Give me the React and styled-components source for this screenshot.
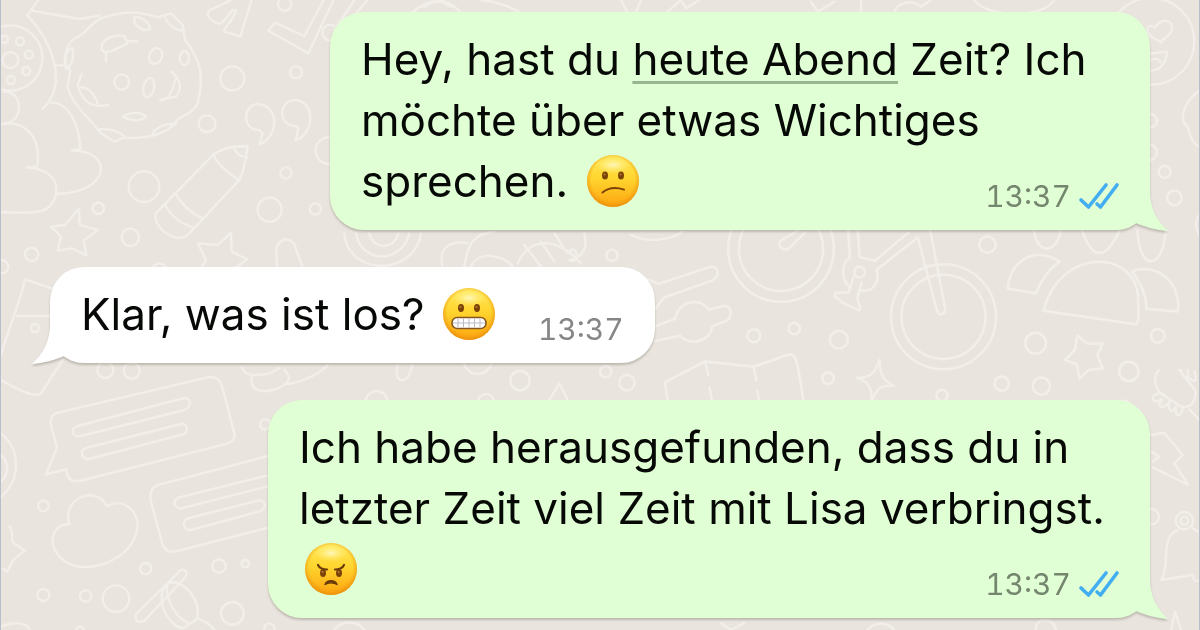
import React from "react";
import styled, { createGlobalStyle } from "styled-components";

const GlobalStyle = createGlobalStyle`
  body {
    margin: 0;
  }
`;

const Page = styled.div`
  position: relative;
  box-sizing: border-box;
  min-height: 100vh;
  overflow: hidden;
  background-color: #e9e5de;
  border: solid #b9bfc8;
  border-width: 0 1px;
  font-family: Inter, "Liberation Sans", sans-serif;
`;

const WallpaperSvg = styled.svg`
  position: absolute;
  inset: 0;
  width: 100%;
  height: 100%;
  fill: none;
  stroke: #f2efeb;
  stroke-width: 7;
  stroke-linecap: round;
  stroke-linejoin: round;
`;

const Chat = styled.main`
  position: relative;
  display: flex;
  flex-direction: column;
  gap: 37px;
  padding: 12px 49px;
`;

const Bubble = styled.article`
  position: relative;
  box-sizing: border-box;
  align-self: ${(props) => (props.$own ? "flex-end" : "flex-start")};
  max-width: ${(props) => props.$maxWidth};
  padding: 17px 31px 18px;
  border-radius: 34px;
  background-color: ${(props) => (props.$own ? "#e1ffd4" : "#fff")};
  color: #060906;
  filter: drop-shadow(0 2px 1px rgba(60, 50, 40, 0.25));
`;

const Tail = styled.svg`
  position: absolute;
  z-index: -1;
  bottom: -1px;
  ${(props) => (props.$own ? "right: -18px;" : "left: -18px;")}
  width: 52px;
  height: 51px;
  fill: ${(props) => (props.$own ? "#e1ffd4" : "#fff")};
  transform: ${(props) => (props.$own ? "none" : "scaleX(-1)")};
`;

const Text = styled.div`
  display: flow-root;
  font-size: 44px;
  line-height: 61px;
`;

const DateLink = styled.a`
  color: inherit;
  text-decoration: underline;
  text-decoration-color: #9ab592;
  text-decoration-thickness: 3px;
  text-decoration-skip-ink: none;
  text-underline-offset: 6px;
`;

// Floats into the free end of the last line
const Meta = styled.span`
  float: right;
  display: flex;
  align-items: center;
  gap: 8px;
  margin: 30px 0 0 39px;
  color: ${(props) => (props.$own ? "#74866e" : "#868689")};
  font-size: 30px;
  line-height: 30px;
`;

const Time = styled.time`
  font-variant-numeric: tabular-nums;
  font-weight: 400;
`;

const Checks = styled.svg`
  width: 40px;
  height: 26px;
  overflow: visible;
  fill: none;
  stroke: #42adf0;
  stroke-width: 3.6;
  stroke-linecap: round;
  stroke-linejoin: round;
`;

const EmojiSvg = styled.svg`
  width: 52px;
  height: 52px;
  margin: 0 4px 0 6px;
  vertical-align: -10px;
`;

const Emoji = ({ name, label, children }) => (
  <EmojiSvg viewBox="0 0 52 52" role="img" aria-label={label}>
    <defs>
      <linearGradient id={`${name}-face`} x1="0" y1="0" x2="0" y2="1">
        <stop offset="0" stopColor="#ffe95c" />
        <stop offset="0.45" stopColor="#ffd52f" />
        <stop offset="1" stopColor="#fda40f" />
      </linearGradient>
      <radialGradient id={`${name}-edge`} cx="0.5" cy="0.47" r="0.53">
        <stop offset="0.78" stopColor="#f09a10" stopOpacity="0" />
        <stop offset="1" stopColor="#e58a0c" stopOpacity="0.75" />
      </radialGradient>
      <radialGradient id={`${name}-shine`}>
        <stop offset="0" stopColor="#fffbd0" stopOpacity="0.85" />
        <stop offset="1" stopColor="#fff27a" stopOpacity="0" />
      </radialGradient>
    </defs>
    <circle cx="26" cy="26" r="26" fill={`url(#${name}-face)`} />
    <ellipse cx="26" cy="10" rx="18" ry="9" fill={`url(#${name}-shine)`} />
    <circle cx="26" cy="26" r="26" fill={`url(#${name}-edge)`} />
    {children}
  </EmojiSvg>
);

const Eyes = ({ y }) => (
  <g>
    <ellipse cx="18" cy={y} rx="3" ry="4" fill="#7a4208" />
    <ellipse cx="34" cy={y} rx="3" ry="4" fill="#7a4208" />
    <circle cx="17.6" cy={y - 1} r="1.1" fill="#b97a2c" />
    <circle cx="33.6" cy={y - 1} r="1.1" fill="#b97a2c" />
  </g>
);

const ConfusedFace = () => (
  <Emoji name="confused" label="😕">
    <Eyes y={20.5} />
    <path
      d="M15.5 37.5C21 33 29 32 37 34.6"
      fill="none"
      stroke="#7a4208"
      strokeWidth="2"
      strokeLinecap="round"
    />
  </Emoji>
);

const GrimacingFace = () => (
  <Emoji name="grimacing" label="😬">
    <Eyes y={20} />
    <rect x="9" y="29.5" width="34" height="11" rx="5.2" fill="#fff" stroke="#85571f" strokeWidth="1.6" />
    <path
      d="M10 35h32M15 31v8M20.5 30.5v9M26 30.5v9M31.5 30.5v9M37 31v8"
      fill="none"
      stroke="#bdb9c0"
      strokeWidth="1"
    />
  </Emoji>
);

const AngryFace = () => (
  <Emoji name="angry" label="😠">
    <Eyes y={30} />
    <path
      d="M13 22C14.5 25 18 26.5 22 26.5M39 22C37.5 25 34 26.5 30 26.5"
      fill="none"
      stroke="#6a3a08"
      strokeWidth="2.2"
      strokeLinecap="round"
    />
    <path
      d="M20 41.5C22 36.5 30 36.5 32 41.5C29 39.3 23 39.3 20 41.5Z"
      fill="#6a3a08"
      stroke="#6a3a08"
      strokeWidth="1.4"
      strokeLinejoin="round"
    />
  </Emoji>
);

const circles = [
  // top left
  [28, 180, 24], [57, 124, 12], [84, 164, 12], [76, 213, 12], [30, 240, 12], [10, 118, 11],
  [694, 235, 36], [885, 217, 18], [618, 371, 25], [429, 560, 46], [855, 519, 17],
  [806, 629, 36], [943, 627, 17], [292, 625, 17], [388, 712, 26], [92, 763, 20], [851, 12, 20],
  [984, 452, 40], [988, 98, 24], [2, 800, 20], [475, 812, 22],
  // bottom left
  [313, 1110, 24], [392, 1112, 24], [792, 1273, 15], [127, 1518, 16], [434, 1706, 17],
  [654, 1698, 20], [733, 1691, 11], [127, 1785, 18], [254, 1788, 17], [345, 1796, 40],
  [694, 1840, 34], [805, 1885, 15], [237, 1890, 10], [102, 984, 12],
  // middle
  [1833, 766, 17], [1557, 1142, 29], [1814, 1115, 17], [1878, 1148, 23], [1127, 1206, 33],
  [1430, 1080, 42], [1455, 1206, 24],
  // right edge
  [3491, 516, 18], [3520, 594, 22], [3448, 362, 20], [3444, 457, 24], [3451, 1550, 23],
  [3550, 1562, 12], [3550, 1562, 26],
];

const bicycleCircles = [
  [612, 132, 15], [316, 310, 18], [429, 290, 16], [554, 321, 25], [524, 429, 16],
  [843, 477, 16], [1010, 444, 20], [1121, 451, 24], [1105, 331, 29], [970, 55, 23],
  [1447, 310, 19], [1366, 410, 27], [1353, 512, 20],
];

const Wallpaper = () => (
  <WallpaperSvg viewBox="0 0 3600 1890" preserveAspectRatio="xMinYMin slice" aria-hidden="true">
    {circles.map(([x, y, r]) => (
      <circle key={`${x}-${y}-${r}`} cx={x} cy={y} r={r} />
    ))}

    {/* ball, clouds and moon */}
    <circle cx="26" cy="174" r="98" />
    <path d="M112 0L78 46C150 120 205 250 125 326M92 32L235 57L296 47M165 196h22M10 275C70 275 65 365 15 370" />
    <path d="M0 372C80 360 122 420 108 500L76 502C200 510 175 615 125 632C90 642 40 638 0 636" />
    <path d="M150 308C200 305 235 370 238 448L212 452C340 450 330 580 167 582" />
    <path d="M300 55C370 30 420 35 470 52L510 40L545 75L552 120C600 180 610 230 590 310C570 350 540 340 520 370C500 400 430 420 370 412L340 425L300 400C270 360 210 310 200 260L208 210C180 200 190 140 220 115C250 110 260 75 300 55Z" />
    <path d="M302 145C300 110 350 105 370 108L380 130L335 152C315 160 302 155 302 145ZM380 122L410 125M315 155V185M242 222L230 255C245 310 275 325 322 315M240 262C265 260 285 290 290 312M510 215C545 240 540 270 525 290L478 300M525 235C515 260 515 275 500 292M365 350C390 335 420 335 435 350C415 368 390 362 365 350ZM400 52C395 80 430 95 446 88C450 70 420 48 400 52ZM490 45C500 80 530 90 548 92M195 205C190 170 195 145 215 145C220 170 215 195 195 205M293 388C330 385 360 395 370 412M455 408C455 380 500 370 525 372" />
    <ellipse cx="464" cy="168" rx="19" ry="24" transform="rotate(20 464 168)" />
    <ellipse cx="550" cy="174" rx="14" ry="21" />
    <ellipse cx="362" cy="246" rx="22" ry="23" />
    <ellipse cx="443" cy="263" rx="16" ry="29" transform="rotate(12 443 263)" />

    {/* bow, ruler, quotes, pencil, stars */}
    <path d="M690 0L625 32C605 50 650 75 660 70C680 55 690 25 705 30C700 60 660 90 672 95L718 110L752 0" />
    <path d="M968 0L910 108L822 68L802 92L922 160L998 0" />
    <path d="M774 390C720 390 725 312 772 312C835 318 835 410 775 433L785 400ZM885 378C830 380 830 300 883 300C945 305 940 400 884 422L892 385Z" />
    <path d="M464 640L636 465C665 442 700 438 740 438C735 480 730 510 715 540L560 705C520 735 455 680 464 640ZM636 465C660 505 680 515 712 540M700 445C705 460 720 470 738 472M522 578C545 620 570 640 604 655M492 615C515 655 540 670 575 682" />
    <path d="M232 628C240 650 230 665 238 675L290 690L248 722L256 765L213 745L170 752L180 710L150 680L192 675Z" />
    <path d="M590 730L650 735L690 698L692 755L738 778L705 803M590 730L615 780L600 803M828 803L826 745C840 705 880 715 884 745L905 803" />

    {/* gift, speech bubbles */}
    <path d="M152 865L72 838C60 900 10 1020 0 1065M48 948H152M185 1080L120 1180C105 1195 50 1170 0 1140" />
    <path d="M172 1238L620 1132C650 1125 660 1145 665 1165L700 1300C705 1320 690 1328 670 1333L235 1443C205 1445 200 1435 195 1408L135 1423L168 1343L150 1275C145 1250 155 1242 172 1238Z" />
    <path d="M230 1278L545 1195C570 1190 575 1220 550 1230L240 1308C215 1315 205 1285 230 1278ZM255 1344L540 1272C560 1268 565 1298 545 1303L265 1377C240 1380 235 1350 255 1344Z" />
    <path d="M805 1367L475 1454C450 1460 445 1480 450 1505L485 1635C495 1655 505 1658 530 1653L805 1582M805 1425L535 1492C510 1500 520 1530 545 1524L805 1458M565 1554L770 1502C795 1498 800 1525 775 1534L570 1590C545 1592 540 1560 565 1554Z" />
    <path d="M205 1572C180 1500 280 1450 318 1518C370 1490 420 1540 408 1590C395 1660 310 1710 230 1700C140 1680 130 1575 205 1572Z" />
    <path d="M0 1300C60 1350 60 1440 0 1490M0 1365C25 1390 25 1420 0 1445M25 1578C40 1600 28 1620 38 1630L72 1652L38 1678L18 1715L5 1705M0 1880C30 1865 80 1865 85 1890" />
    <path d="M405 1842L540 1710C555 1705 562 1720 550 1735L430 1862C410 1872 400 1860 405 1842ZM500 1750C460 1790 490 1870 545 1885L585 1860C610 1810 545 1730 500 1750ZM500 1750C490 1790 520 1850 560 1868M590 1855C615 1865 630 1875 640 1890" />
    <path d="M722 1100C730 1130 760 1128 800 1122L835 1105M752 1125C745 1180 790 1180 830 1165C870 1150 870 1130 850 1110M850 1152C900 1150 960 1120 980 1095" />

    {/* strip above the first message */}
    <path d="M1060 0L1000 90M1100 0L1065 40M1230 40C1290 -10 1340 -10 1380 40M1270 20C1300 0 1320 0 1350 20M1440 0C1490 5 1530 20 1560 40M1860 0L1880 40M1920 0L1905 35M2000 35L2040 0L2055 25L2095 0M2430 5L2450 35L2500 5M2580 0V35M2680 35C2690 10 2730 -5 2760 20L2790 0M2920 0C2950 50 3120 60 3160 0" />

    {/* rings and croissant */}
    <path d="M1030 700C1040 830 1240 830 1260 700M1065 700C1080 790 1200 795 1225 700M1105 700C1115 750 1180 750 1192 700M1325 803C1310 740 1350 720 1400 730M1390 800C1400 730 1420 700 1480 695M1410 800C1430 750 1510 765 1535 800M1550 790C1580 720 1660 700 1740 790M1570 735L1620 800M1620 725L1660 785M1660 700L1700 760C1730 720 1740 800 1705 780C1750 770 1760 740 1750 700M1890 705C1940 730 2010 720 2045 695M1190 1095C1185 1120 1185 1140 1205 1140C1225 1138 1225 1120 1235 1095M1645 1200L1675 1150L1700 1200" />

    <g transform="translate(1920 675) scale(1.0714)">
      {bicycleCircles.map(([x, y, r]) => (
        <circle key={`${x}-${y}`} cx={x} cy={y} r={r} />
      ))}

      {/* spoon and fork */}
      <path d="M0 145L50 165L195 117C215 115 225 140 200 155L65 203L40 235M40 283L95 263C110 205 170 205 190 237L230 227C260 225 255 265 235 270L200 283C190 335 130 335 110 310L40 325" />

      {/* bicycle */}
      <circle cx="392" cy="67" r="148" />
      <circle cx="392" cy="67" r="118" />
      <circle cx="847" cy="257" r="147" />
      <circle cx="847" cy="257" r="118" />
      <path d="M440 15L390 45C380 60 400 75 415 65L460 20M580 15L585 90C555 115 565 155 582 172M607 15L612 90L655 100L750 20M660 125L775 35L828 238C835 260 858 250 850 225L810 15M660 125C670 165 645 190 615 182M595 145L582 188L545 190C535 205 560 205 560 215L607 238C625 240 600 210 607 200L618 160" />

      {/* map and sparkle */}
      <path d="M80 525L67 440L180 382L315 397L415 362C430 360 435 380 440 400L460 525M180 382L188 420M192 455L198 490M315 397L323 435M326 465L332 500" />
      <path d="M668 378C670 420 675 432 707 450C668 448 662 458 645 492C647 458 640 440 605 428C645 428 655 415 668 378Z" />

      {/* sunrise and star */}
      <path d="M1127 240L1385 278C1400 270 1390 230 1392 200C1380 65 1170 65 1127 240ZM1172 103C1100 55 1030 105 1027 178L1105 192C1120 155 1140 125 1172 103ZM1375 130C1430 105 1515 150 1503 242L1415 235C1415 195 1400 165 1375 130ZM1100 15C1110 85 1165 80 1175 15M1235 15C1265 100 1300 100 1340 15M1390 15C1395 130 1460 130 1470 15" />
      <path d="M1222 310L1250 332L1292 332L1278 365L1293 402L1255 405L1228 430L1220 390L1187 378L1215 350Z" />
    </g>

    {/* smiley and muffin */}
    <circle cx="3450" cy="124" r="130" />
    <path d="M3470 120C3420 100 3440 65 3462 82C3480 50 3525 60 3510 95C3505 110 3480 118 3482 128ZM3450 160L3498 155C3495 190 3480 210 3450 212M3450 180C3460 175 3472 175 3478 185M3600 270C3550 300 3530 360 3560 380C3570 430 3590 440 3600 440M3600 640C3580 660 3580 690 3600 710" />

    {/* peanut, lightning, bell */}
    <path d="M3475 1110C3455 1130 3460 1160 3480 1180L3540 1220C3570 1225 3590 1200 3582 1170L3535 1110M3540 1110C3550 1140 3565 1145 3560 1110M3565 1135C3585 1150 3590 1140 3580 1115M3480 1180C3450 1180 3450 1200 3465 1205C3485 1200 3490 1185 3475 1215C3480 1230 3500 1215 3505 1205C3500 1230 3510 1245 3525 1220C3520 1250 3540 1255 3545 1225M3565 1228L3600 1265" />
    <path d="M3452 1305L3490 1298L3545 1365L3520 1390L3562 1455L3455 1402M3452 1355L3475 1370L3455 1385" />
    <path d="M3530 1590C3475 1610 3510 1700 3480 1740L3575 1725C3580 1755 3600 1740 3600 1730M3575 1585L3600 1600M3510 1890L3522 1835L3540 1890" />

    {/* strip below the last message */}
    <path d="M1000 1890C1020 1860 1070 1860 1090 1890M3105 1890C3100 1850 3160 1850 3165 1890M2160 1870L2190 1890L2230 1868M2600 1890C2620 1865 2660 1865 2680 1890" />
  </WallpaperSvg>
);

const Message = ({ own, maxWidth, time, children }) => (
  <Bubble $own={own} $maxWidth={maxWidth}>
    <Tail $own={own} viewBox="-34 -50 52 51" aria-hidden="true">
      <path d="M0 -50V-39C0 -22 7 -9 18 1C6 0 -5 -3 -14 -7L-34 -10V-50Z" />
    </Tail>
    <Text>
      {children}
      <Meta $own={own}>
        <Time>{time}</Time>
        {own && (
          <Checks viewBox="0 0 40 26" role="img" aria-label="Gelesen">
            <path d="M2 17L9.5 24L27 2M18 21L21.5 24L38 2" />
          </Checks>
        )}
      </Meta>
    </Text>
  </Bubble>
);

const App = () => (
  <Page>
    <GlobalStyle />
    <Wallpaper />
    <Chat>
      <Message own maxWidth="820px" time="13:37">
        Hey, hast du <DateLink href="#">heute Abend</DateLink> Zeit? Ich möchte
        über etwas Wichtiges sprechen. <ConfusedFace />
      </Message>
      <Message maxWidth="820px" time="13:37">
        Klar, was ist los? <GrimacingFace />
      </Message>
      <Message own maxWidth="882px" time="13:37">
        Ich habe herausgefunden, dass du in letzter Zeit viel Zeit mit Lisa
        verbringst. <AngryFace />
      </Message>
    </Chat>
  </Page>
);

export default App;
